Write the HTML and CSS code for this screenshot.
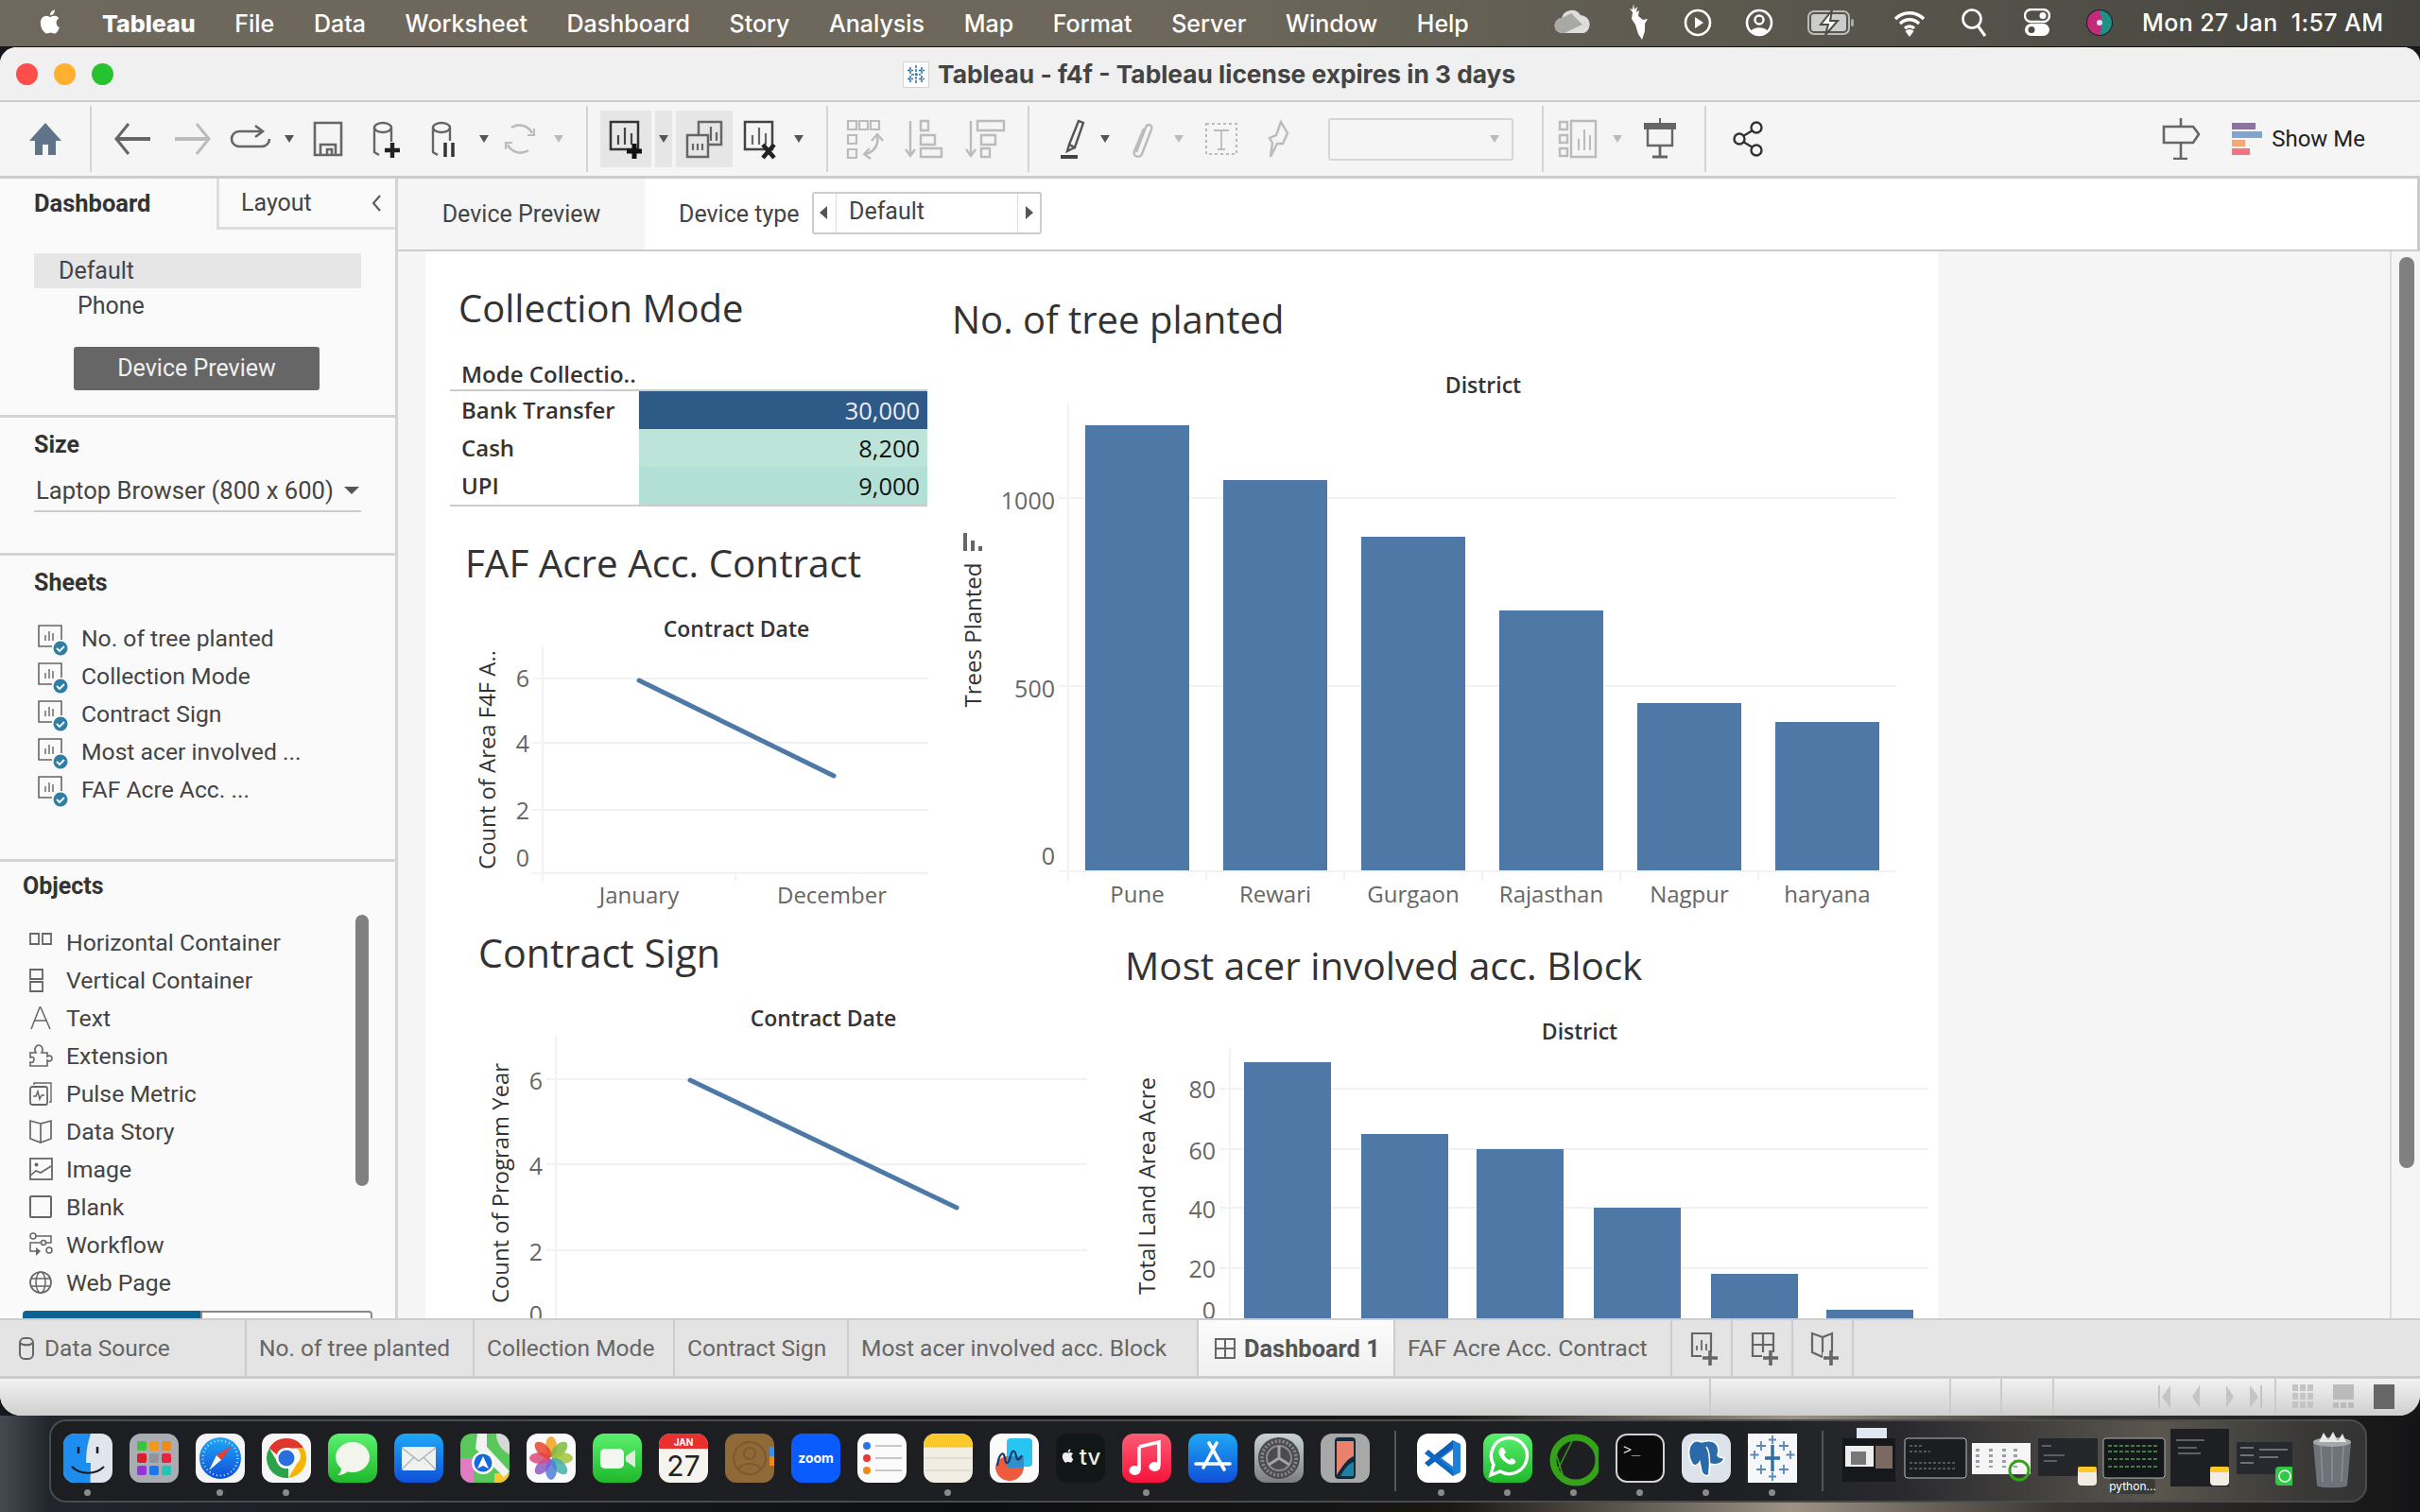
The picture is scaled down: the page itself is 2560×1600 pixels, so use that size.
FILE: index.html
```html
<!DOCTYPE html>
<html lang="en">

<head>
  <meta charset="UTF-8">
  <title>Tableau - f4f</title>
  <link rel="stylesheet" href="styles.css">
</head>

<body>

  <svg class="defs" width="0" height="0">
    <defs>
      <symbol id="apple" viewBox="0 0 24 24">
        <path d="M18.7 19.5c-.8 1.2-1.7 2.4-3 2.4-1.3 0-1.8-.8-3.3-.8-1.5 0-2 .8-3.3.8-1.3.1-2.3-1.3-3.1-2.5C4.3 17 3 12.5 4.7 9.5c.9-1.5 2.4-2.4 4.1-2.5 1.3 0 2.5.9 3.3.9.8 0 2.3-1.1 3.8-.9.7 0 2.5.3 3.6 2-.1.1-2.2 1.3-2.2 3.8 0 3 2.6 4 2.6 4-.1.1-.4 1.4-1.3 2.7M13 3.5c.7-.8 1.9-1.5 2.9-1.5.1 1.2-.3 2.3-1 3.2-.7.8-1.8 1.5-2.9 1.4-.1-1.2.4-2.3 1-3.1" />
      </symbol>
      <symbol id="sheet-check" viewBox="0 0 34 34">
        <path d="M26 17V2H2v22h14" fill="none" stroke="#666" stroke-width="1.6" />
        <path d="M9 18v-6M13 18V8M17 18v-8" fill="none" stroke="#777" stroke-width="1.6" />
        <circle cx="25" cy="26" r="7.5" fill="#2e7ea6" />
        <path d="M21 26l3 3 5-5" fill="none" stroke="#fff" stroke-width="1.8" />
      </symbol>
      <linearGradient id="g-blue" x1="0" y1="0" x2="0" y2="1">
        <stop offset="0" stop-color="#1fa8f5" />
        <stop offset="1" stop-color="#0f4fd8" />
      </linearGradient>
      <linearGradient id="g-green" x1="0" y1="0" x2="0" y2="1">
        <stop offset="0" stop-color="#5bf06f" />
        <stop offset="1" stop-color="#1fb82c" />
      </linearGradient>
      <linearGradient id="g-red" x1="0" y1="0" x2="0" y2="1">
        <stop offset="0" stop-color="#fb5c74" />
        <stop offset="1" stop-color="#f8123b" />
      </linearGradient>
      <linearGradient id="g-grey" x1="0" y1="0" x2="0" y2="1">
        <stop offset="0" stop-color="#c9d3d8" />
        <stop offset="1" stop-color="#7d7d7d" />
      </linearGradient>
    </defs>
  </svg>

  <header class="menubar">
    <svg class="apple" width="30" height="34"><use href="#apple" fill="#fff" /></svg>
    <nav class="menus">
      <span class="menu-app">Tableau</span>
      <span>File</span>
      <span>Data</span>
      <span>Worksheet</span>
      <span>Dashboard</span>
      <span>Story</span>
      <span>Analysis</span>
      <span>Map</span>
      <span>Format</span>
      <span>Server</span>
      <span>Window</span>
      <span>Help</span>
    </nav>
    <div class="status-icons">
      <svg width="42" height="30" viewBox="0 0 42 30">
        <path d="M10 26a8 8 0 0 1-1-16 11 11 0 0 1 20-3 10 10 0 0 1 4 19z" fill="#ddd" />
        <path d="M19 5l12 12-19 9H10a8 8 0 0 1-1-16z" fill="#a8a8a4" />
      </svg>
      <svg width="28" height="40" viewBox="0 0 28 40">
        <path d="M7 0l1 6 3-3-1 6 3-2-1 6 5 4 5-1-3 5v8l-3 9-4-6-3-10-4-6 1-7-3-4 3 1z" fill="#fff" />
      </svg>
      <svg width="30" height="30" viewBox="0 0 30 30">
        <circle cx="15" cy="15" r="13" fill="none" stroke="#fff" stroke-width="2.6" />
        <path d="M12 9l9 6-9 6z" fill="#fff" />
      </svg>
      <svg width="30" height="30" viewBox="0 0 30 30">
        <circle cx="15" cy="15" r="13" fill="none" stroke="#fff" stroke-width="2.6" />
        <circle cx="15" cy="12" r="4.5" fill="none" stroke="#fff" stroke-width="2.4" />
        <path d="M6 24c3-5 15-5 18 0-4 4-14 4-18 0" fill="#fff" />
      </svg>
      <svg width="50" height="28" viewBox="0 0 50 28">
        <rect x="1" y="2" width="43" height="24" rx="6" fill="none" stroke="#bbb" stroke-width="2" />
        <rect x="4" y="5" width="37" height="18" rx="3" fill="#ccc" />
        <rect x="46" y="10" width="3" height="8" rx="1.5" fill="#aaa" />
        <path d="M26 1L14 16h8l-3 11 13-15h-8z" fill="#fff" stroke="#4d4b44" stroke-width="2" />
      </svg>
      <svg width="36" height="30" viewBox="0 0 36 30">
        <path d="M3 11a21 21 0 0 1 30 0M8 16a14 14 0 0 1 20 0M13 21a7 7 0 0 1 10 0" fill="none" stroke="#fff" stroke-width="3.4" />
        <path d="M18 30l-4.500-6a6 6 0 0 1 9 0z" fill="#fff" />
      </svg>
      <svg width="30" height="32" viewBox="0 0 30 32">
        <circle cx="12" cy="12" r="9.500" fill="none" stroke="#fff" stroke-width="2.6" />
        <path d="M18 19l8 11" stroke="#fff" stroke-width="3" />
      </svg>
      <svg width="28" height="30" viewBox="0 0 28 30">
        <rect x="1" y="1" width="26" height="13" rx="6.500" fill="none" stroke="#fff" stroke-width="2.4" />
        <circle cx="20" cy="7.500" r="3.500" fill="#fff" />
        <rect x="1" y="16" width="26" height="13" rx="6.500" fill="#fff" />
        <circle cx="8" cy="22.500" r="3.500" fill="#4d4b44" />
      </svg>
      <svg class="siri" width="30" height="30" viewBox="0 0 30 30">
        <circle cx="15" cy="15" r="14" fill="#16222e" />
        <path d="M15 2a13 13 0 0 1 0 26c-3-6-3-20 0-26z" fill="#1f8f88" />
        <path d="M15 28a13 13 0 0 1 0-26c3 8 3 18 0 26z" fill="#c32a78" />
        <circle cx="15" cy="15" r="3" fill="#dfe6f5" />
      </svg>
    </div>
    <span class="clock">Mon 27 Jan&nbsp; 1:57 AM</span>
  </header>

  <div class="window">
    <div class="titlebar">
      <div class="lights">
        <i class="light light-red"></i>
        <i class="light light-yellow"></i>
        <i class="light light-green"></i>
      </div>
      <div class="win-title">
        <svg width="28" height="28" viewBox="0 0 28 28">
          <rect x=".5" y=".5" width="27" height="27" fill="#fff" stroke="#d4d4d4" />
          <path d="M14 4v20M9 14h10M8 6v7M5 9.500h6M20 6v7M17 9.500h6M8 15v7M5 18.500h6M20 15v7M17 18.500h6" stroke="#2d6ea5" stroke-width="1.500" stroke-dasharray="3 1" />
        </svg>
        <span>Tableau - f4f - Tableau license expires in 3 days</span>
      </div>
    </div>

    <div class="toolbar">
      <div class="tool">
        <svg width="44" height="44" viewBox="0 0 44 44"><path d="M22 5l17 19h-6v15h-8V28h-6v11h-8V24H5z" fill="#5f7389" /></svg>
      </div>
      <i class="tb-sep tb-sep-first"></i>

      <div class="tool tool-m">
        <svg width="44" height="44" viewBox="0 0 44 44"><path d="M17 6L4 22l13 16" fill="none" stroke="#666" stroke-width="3" /><path d="M6 22h34" stroke="#666" stroke-width="4" /></svg>
      </div>
      <div class="tool">
        <svg width="44" height="44" viewBox="0 0 44 44"><path d="M27 6l13 16-13 16" fill="none" stroke="#bbb" stroke-width="3" /><path d="M38 22H4" stroke="#bbb" stroke-width="4" /></svg>
      </div>
      <div class="tool">
        <svg width="44" height="44" viewBox="0 0 44 44"><path d="M34 14H10a8 8 0 0 0 0 16h24a8 8 0 0 0 8-8" fill="none" stroke="#666" stroke-width="2.6" /><path d="M27 8l8 6-8 6" fill="none" stroke="#666" stroke-width="2.6" /></svg>
      </div>
      <i class="caret"></i>
      <div class="tool">
        <svg width="44" height="44" viewBox="0 0 44 44"><path d="M8 5h28v34H8z" fill="none" stroke="#666" stroke-width="2.6" /><path d="M14 39V28h16v11M21 39v-6h5v6" fill="none" stroke="#666" stroke-width="2.6" /></svg>
      </div>
      <div class="tool">
        <svg width="44" height="44" viewBox="0 0 44 44"><ellipse cx="18" cy="10" rx="9" ry="5" fill="none" stroke="#666" stroke-width="2.4" /><path d="M9 10v26l5 3M27 10v15" fill="none" stroke="#666" stroke-width="2.4" /><path d="M28 26v16M20 34h16" stroke="#222" stroke-width="4.400" /></svg>
      </div>
      <div class="tool">
        <svg width="44" height="44" viewBox="0 0 44 44"><ellipse cx="18" cy="10" rx="9" ry="5" fill="none" stroke="#666" stroke-width="2.4" /><path d="M9 10v26l5 3M27 10v14" fill="none" stroke="#666" stroke-width="2.4" /><path d="M22 26v15M30 26v15" stroke="#333" stroke-width="3.500" /></svg>
      </div>
      <i class="caret"></i>
      <div class="tool tool-k">
        <svg width="44" height="44" viewBox="0 0 44 44"><path d="M13 10a15 15 0 0 1 22 6M31 34a15 15 0 0 1-22-6" fill="none" stroke="#bbb" stroke-width="2.6" /><path d="M30 18l7 0 0-7M14 26l-7 0 0 7" fill="none" stroke="#bbb" stroke-width="2.200" /></svg>
      </div>
      <i class="caret caret-off"></i>
      <i class="tb-sep tb-sep-b"></i>

      <div class="tool tool-on tool-a">
        <svg width="44" height="44" viewBox="0 0 44 44"><path d="M6 4h29v29H6z" fill="none" stroke="#333" stroke-width="2.500" /><path d="M14 28V18M21 28V10M28 28V16" stroke="#444" stroke-width="2.200" /><path d="M31 27v16M23 35h16" stroke="#111" stroke-width="5" /></svg>
      </div>
      <i class="caret caret-on"></i>
      <div class="tool tool-on tool-b">
        <svg width="44" height="44" viewBox="0 0 44 44"><path d="M16 4h24v24H16z" fill="#e6e6e6" stroke="#666" stroke-width="2.500" /><path d="M23 24v-6M29 24V9M35 24v-9" stroke="#666" stroke-width="2.200" /><path d="M4 18h22v23H4z" fill="#e6e6e6" stroke="#666" stroke-width="2.500" /><path d="M10 27v7M15 27v7M20 27v7" stroke="#666" stroke-width="2.200" /></svg>
      </div>
      <div class="tool tool-c">
        <svg width="44" height="44" viewBox="0 0 44 44"><path d="M6 4h29v29H6z" fill="none" stroke="#444" stroke-width="2.500" /><path d="M14 28V18M21 28V10M28 28V16" stroke="#666" stroke-width="2.200" /><path d="M25 28l12 14M37 28L25 42" stroke="#222" stroke-width="4.500" /></svg>
      </div>
      <i class="caret"></i>
      <i class="tb-sep tb-sep-c"></i>

      <div class="tool tool-d">
        <svg width="44" height="44" viewBox="0 0 44 44"><path d="M5 3h9v9H5zM17 3h9v9h-9zM29 3h9v9h-9zM5 18h9v9H5zM5 33h9v9H5z" fill="none" stroke="#bbb" stroke-width="2.200" /><path d="M36 18c2 10-3 18-13 20" fill="none" stroke="#bbb" stroke-width="2.600" /><path d="M30 24l6-7 6 7M28 32l-6 6 7 5" fill="none" stroke="#bbb" stroke-width="2.200" /></svg>
      </div>
      <div class="tool tool-n">
        <svg width="44" height="44" viewBox="0 0 44 44"><path d="M7 3v36M2 33l5 7 5-7" fill="none" stroke="#bbb" stroke-width="2.400" /><path d="M18 3h8v10h-8zM18 18h15v10H18zM18 32h22v9H18z" fill="none" stroke="#bbb" stroke-width="2.400" /></svg>
      </div>
      <div class="tool tool-n">
        <svg width="44" height="44" viewBox="0 0 44 44"><path d="M7 3v36M2 33l5 7 5-7" fill="none" stroke="#bbb" stroke-width="2.400" /><path d="M14 3h28v10H14zM18 18h15v10H18zM18 32h9v9h-9z" fill="none" stroke="#bbb" stroke-width="2.400" /></svg>
      </div>
      <i class="tb-sep tb-sep-d"></i>

      <div class="tool tool-e">
        <svg width="44" height="44" viewBox="0 0 44 44"><path d="M29 3l-10 25 6 3 9-26zM19 28l-2 7 8-4" fill="none" stroke="#555" stroke-width="2.400" /><path d="M10 41h18" stroke="#444" stroke-width="4" /></svg>
      </div>
      <i class="caret caret-tight"></i>
      <div class="tool tool-f">
        <svg width="44" height="44" viewBox="0 0 44 44"><path d="M18 36l10-26c2-5 8-3 6 2L24 38c-2 5-10 3-8-3l10-24" fill="none" stroke="#bbb" stroke-width="2.400" /></svg>
      </div>
      <i class="caret caret-off"></i>
      <div class="tool tool-g">
        <svg width="44" height="44" viewBox="0 0 44 44"><rect x="6" y="6" width="32" height="32" fill="none" stroke="#bbb" stroke-width="2" stroke-dasharray="3 3" /><path d="M14 13h16M22 13v20M18 33h8" fill="none" stroke="#bbb" stroke-width="1.800" /></svg>
      </div>
      <div class="tool tool-h">
        <svg width="44" height="44" viewBox="0 0 44 44"><path d="M25 4l7 12-5 11-6 0-7 14 2-15-3-5 7-3z" fill="none" stroke="#bbb" stroke-width="2.400" /></svg>
      </div>
      <div class="tb-select"><i class="caret caret-off"></i></div>
      <i class="tb-sep tb-sep-e"></i>

      <div class="tool tool-i">
        <svg width="44" height="44" viewBox="0 0 44 44"><path d="M2 4h8v8H2zM2 18h8v8H2zM2 32h8v8H2zM14 3h26v38H14z" fill="none" stroke="#bbb" stroke-width="2.400" /><path d="M22 34V22M28 34V12M34 34V18" stroke="#bbb" stroke-width="2" /></svg>
      </div>
      <i class="caret caret-off"></i>
      <div class="tool tool-j">
        <svg width="44" height="44" viewBox="0 0 44 44"><path d="M22 0v6" stroke="#666" stroke-width="2" /><path d="M5 5h34v7H5z" fill="#666" /><path d="M9 12v17h26V12" fill="none" stroke="#666" stroke-width="2.400" /><path d="M22 29v13M14 41h16" stroke="#666" stroke-width="2.800" /></svg>
      </div>
      <i class="tb-sep tb-sep-f"></i>

      <div class="tool">
        <svg width="44" height="44" viewBox="0 0 44 44"><circle cx="13" cy="22" r="5.500" fill="none" stroke="#333" stroke-width="2.400" /><circle cx="31" cy="10" r="5.500" fill="none" stroke="#333" stroke-width="2.400" /><circle cx="31" cy="34" r="5.500" fill="none" stroke="#333" stroke-width="2.400" /><path d="M17 19l10-6M17 25l10 6" stroke="#333" stroke-width="2.400" /></svg>
      </div>

      <div class="tb-right">
        <svg width="44" height="44" viewBox="0 0 44 44"><path d="M22 0v44M14 43h15" fill="none" stroke="#666" stroke-width="2.600" /><path d="M4 9h31l6 8-6 9H4z" fill="#f5f5f5" stroke="#666" stroke-width="2.600" /></svg>
        <div class="show-me">
          <div class="show-bars">
            <i class="bar-a"></i><i class="bar-b"></i><i class="bar-c"></i><i class="bar-d"></i>
          </div>
          <span>Show Me</span>
        </div>
      </div>
    </div>

    <div class="main">
      <aside class="side">
        <div class="side-tabs">
          <div class="side-tab side-tab-on">Dashboard</div>
          <div class="side-tab side-tab-off">
            <span>Layout</span>
            <svg width="12" height="20" viewBox="0 0 12 20"><path d="M10 2L3 10l7 8" fill="none" stroke="#555" stroke-width="2" /></svg>
          </div>
        </div>

        <section class="sec sec-device">
          <div class="dev-row dev-row-on">Default</div>
          <div class="dev-row dev-row-sub">Phone</div>
          <div class="dev-btn">Device Preview</div>
        </section>

        <section class="sec sec-size">
          <h4 class="sec-title">Size</h4>
          <div class="size-pick">
            <span>Laptop Browser (800 x 600)</span>
            <i class="caret caret-size"></i>
          </div>
        </section>

        <section class="sec sec-sheets">
          <h4 class="sec-title">Sheets</h4>
          <ul class="sheet-list">
            <li><svg width="34" height="34"><use href="#sheet-check" /></svg>No. of tree planted</li>
            <li><svg width="34" height="34"><use href="#sheet-check" /></svg>Collection Mode</li>
            <li><svg width="34" height="34"><use href="#sheet-check" /></svg>Contract Sign</li>
            <li><svg width="34" height="34"><use href="#sheet-check" /></svg>Most acer involved ...</li>
            <li><svg width="34" height="34"><use href="#sheet-check" /></svg>FAF Acre Acc. ...</li>
          </ul>
        </section>

        <section class="sec-objects">
          <h4 class="sec-title">Objects</h4>
          <ul class="object-list">
            <li>
              <svg width="26" height="26" viewBox="0 0 26 26"><path d="M2 4h9v11H2zM15 4h9v11h-9z" fill="none" stroke="#666" stroke-width="1.800" /></svg>
              Horizontal Container
            </li>
            <li>
              <svg width="26" height="26" viewBox="0 0 26 26"><path d="M2 2h13v10H2zM2 15h13v10H2z" fill="none" stroke="#666" stroke-width="1.800" /></svg>
              Vertical Container
            </li>
            <li>
              <svg width="26" height="26" viewBox="0 0 26 26"><path d="M3 25L12 2h1l10 23M7 16h13" fill="none" stroke="#666" stroke-width="1.500" /></svg>
              Text
            </li>
            <li>
              <svg width="26" height="26" viewBox="0 0 26 26"><path d="M2 10h6c-3-5 1-8 3-8s6 3 3 8h6v4c3-2 5 0 5 2s-2 4-5 2v6H2v-4c3 1 4-1 4-3s-1-3-4-2z" fill="none" stroke="#666" stroke-width="1.600" /></svg>
              Extension
            </li>
            <li>
              <svg width="26" height="26" viewBox="0 0 26 26"><path d="M6 4V2h18v20h-2" fill="none" stroke="#666" stroke-width="1.400" /><rect x="2" y="6" width="18" height="19" rx="2" fill="none" stroke="#666" stroke-width="1.800" /><path d="M5 16h3l2-5 2 8 2-4h3" fill="none" stroke="#666" stroke-width="1.500" /></svg>
              Pulse Metric
            </li>
            <li>
              <svg width="26" height="26" viewBox="0 0 26 26"><path d="M13 5L2 2v19l11 4 11-4V2zM13 5v20" fill="none" stroke="#666" stroke-width="1.700" /></svg>
              Data Story
            </li>
            <li>
              <svg width="26" height="26" viewBox="0 0 26 26"><rect x="2" y="2" width="23" height="22" fill="none" stroke="#666" stroke-width="1.800" /><circle cx="8.500" cy="8.500" r="2" fill="#666" /><path d="M2 20l6-5 5 2 11-7" fill="none" stroke="#666" stroke-width="1.600" /></svg>
              Image
            </li>
            <li>
              <svg width="26" height="26" viewBox="0 0 26 26"><rect x="2" y="2" width="22" height="22" rx="1" fill="none" stroke="#666" stroke-width="2" /></svg>
              Blank
            </li>
            <li>
              <svg width="26" height="26" viewBox="0 0 26 26"><circle cx="5" cy="4" r="3" fill="none" stroke="#666" stroke-width="1.500" /><path d="M8 4h16v7h-6M14 11H2v9h9" fill="none" stroke="#666" stroke-width="1.500" /><circle cx="16" cy="11" r="2.500" fill="none" stroke="#666" stroke-width="1.500" /><circle cx="22" cy="19" r="3" fill="none" stroke="#666" stroke-width="1.500" /><path d="M8 16l5 4-5 5z" fill="#666" /></svg>
              Workflow
            </li>
            <li>
              <svg width="26" height="26" viewBox="0 0 26 26"><circle cx="13" cy="13" r="11" fill="none" stroke="#666" stroke-width="1.700" /><ellipse cx="13" cy="13" rx="5" ry="11" fill="none" stroke="#666" stroke-width="1.500" /><path d="M2 9h22M2 17h22" stroke="#666" stroke-width="1.500" /></svg>
              Web Page
            </li>
          </ul>
          <div class="objects-scroll"></div>
          <div class="mode-tabs"><i class="mode-tab-on"></i><i class="mode-tab-off"></i></div>
        </section>
      </aside>

      <div class="canvas">
        <div class="device-bar">
          <div class="device-tab">Device Preview</div>
          <span class="device-label">Device type</span>
          <div class="stepper">
            <span class="step-btn step-left"></span>
            <span class="step-value">Default</span>
            <span class="step-btn step-right"></span>
          </div>
        </div>

        <div class="canvas-body">
          <div class="dash">
            <div class="dash-top">
              <div class="col-left">
                <h2 class="zone-title title-collection">Collection Mode</h2>
                <div class="mode-table">
                  <div class="mt-head">Mode Collectio..</div>
                  <div class="mt-label">Bank Transfer</div>
                  <div class="mt-val mt-high">30,000</div>
                  <div class="mt-label">Cash</div>
                  <div class="mt-val mt-cash">8,200</div>
                  <div class="mt-label">UPI</div>
                  <div class="mt-val mt-upi">9,000</div>
                </div>

                <h2 class="zone-title title-faf">FAF Acre Acc. Contract</h2>
                <svg class="chart chart-faf" width="500" height="325" viewBox="500 640 500 325">
                  <text class="c-head" x="779" y="674">Contract Date</text>
                  <path class="c-grid" d="M563 718H982M563 786H982M563 857H982M563 924H982M574 684V932M778 924V932" />
                  <text class="c-tick" x="560" y="727">6</text>
                  <text class="c-tick" x="560" y="796">4</text>
                  <text class="c-tick" x="560" y="867">2</text>
                  <text class="c-tick" x="560" y="917">0</text>
                  <path class="c-line" d="M676 720L882 821" />
                  <text class="c-x" x="676" y="956">January</text>
                  <text class="c-x" x="880" y="956">December</text>
                  <text class="c-axis" transform="rotate(-90 524 804)" x="524" y="804" textLength="232" lengthAdjust="spacingAndGlyphs">Count of Area F4F A..</text>
                </svg>
              </div>

              <div class="col-right">
                <h2 class="zone-title title-trees">No. of tree planted</h2>
                <svg class="chart chart-trees" width="1050" height="580" viewBox="1000 385 1050 580">
                  <text class="c-head" x="1569" y="416">District</text>
                  <path class="c-grid" d="M1120 527H2006M1120 726H2006M1120 922H2006M1130 427V932M1276 922V932M1422 922V932M1568 922V932M1714 922V932M1860 922V932" />
                  <text class="c-tick" x="1116" y="539">1000</text>
                  <text class="c-tick" x="1116" y="738">500</text>
                  <text class="c-tick" x="1116" y="915">0</text>
                  <rect class="c-bar" x="1148" y="450" width="110" height="471" />
                  <rect class="c-bar" x="1294" y="508" width="110" height="413" />
                  <rect class="c-bar" x="1440" y="568" width="110" height="353" />
                  <rect class="c-bar" x="1586" y="646" width="110" height="275" />
                  <rect class="c-bar" x="1732" y="744" width="110" height="177" />
                  <rect class="c-bar" x="1878" y="764" width="110" height="157" />
                  <text class="c-x" x="1203" y="955">Pune</text>
                  <text class="c-x" x="1349" y="955">Rewari</text>
                  <text class="c-x" x="1495" y="955">Gurgaon</text>
                  <text class="c-x" x="1641" y="955">Rajasthan</text>
                  <text class="c-x" x="1787" y="955">Nagpur</text>
                  <text class="c-x" x="1933" y="955">haryana</text>
                  <text class="c-axis" transform="rotate(-90 1038 672)" x="1038" y="672" textLength="153" lengthAdjust="spacingAndGlyphs">Trees Planted</text>
                  <path class="c-sort" d="M1019 564h4v19h-4zM1027 572h4v11h-4zM1035 578h4v5h-4z" />
                </svg>
              </div>
            </div>

            <div class="dash-bottom">
              <div class="col-sign">
                <h2 class="zone-title title-sign">Contract Sign</h2>
                <svg class="chart chart-sign" width="680" height="345" viewBox="500 1050 680 345">
                  <text class="c-head" x="871" y="1086">Contract Date</text>
                  <path class="c-grid" d="M578 1142H1150M578 1232H1150M578 1323H1150M588 1097V1395" />
                  <text class="c-tick" x="574" y="1153">6</text>
                  <text class="c-tick" x="574" y="1243">4</text>
                  <text class="c-tick" x="574" y="1334">2</text>
                  <text class="c-tick" x="574" y="1400">0</text>
                  <path class="c-line" d="M730 1143L1012 1278" />
                  <text class="c-axis" transform="rotate(-90 538 1252)" x="538" y="1252" textLength="254" lengthAdjust="spacingAndGlyphs">Count of Program Year</text>
                </svg>
              </div>

              <div class="col-most">
                <h2 class="zone-title title-most">Most acer involved acc. Block</h2>
                <svg class="chart chart-most" width="870" height="330" viewBox="1180 1065 870 330">
                  <text class="c-head" x="1671" y="1100">District</text>
                  <path class="c-grid" d="M1290 1152H2040M1290 1216H2040M1290 1278H2040M1290 1342H2040M1301 1110V1395" />
                  <text class="c-tick" x="1286" y="1162">80</text>
                  <text class="c-tick" x="1286" y="1227">60</text>
                  <text class="c-tick" x="1286" y="1289">40</text>
                  <text class="c-tick" x="1286" y="1352">20</text>
                  <text class="c-tick" x="1286" y="1396">0</text>
                  <rect class="c-bar" x="1316" y="1124" width="92" height="271" />
                  <rect class="c-bar" x="1440" y="1200" width="92" height="195" />
                  <rect class="c-bar" x="1562" y="1216" width="92" height="179" />
                  <rect class="c-bar" x="1686" y="1278" width="92" height="117" />
                  <rect class="c-bar" x="1810" y="1348" width="92" height="47" />
                  <rect class="c-bar" x="1932" y="1386" width="92" height="9" />
                  <text class="c-axis" transform="rotate(-90 1222 1255)" x="1222" y="1255" textLength="230" lengthAdjust="spacingAndGlyphs">Total Land Area Acre</text>
                </svg>
              </div>
            </div>
          </div>

          <div class="canvas-track"><div class="canvas-thumb"></div></div>
        </div>
      </div>
    </div>

    <div class="tabbar">
      <div class="tab tab-source">
        <svg width="18" height="26" viewBox="0 0 18 26"><rect x="2" y="2" width="14" height="22" rx="5" fill="none" stroke="#666" stroke-width="2" /><path d="M2 7c3 3 11 3 14 0" fill="none" stroke="#666" stroke-width="2" /></svg>
        Data Source
      </div>
      <div class="tab tab-trees">No. of tree planted</div>
      <div class="tab tab-coll">Collection Mode</div>
      <div class="tab tab-sign">Contract Sign</div>
      <div class="tab tab-most">Most acer involved acc. Block</div>
      <div class="tab tab-active">
        <svg width="24" height="24" viewBox="0 0 24 24"><path d="M2 2h20v20H2zM12 2v20M2 12h20" fill="none" stroke="#666" stroke-width="2" /></svg>
        Dashboard 1
      </div>
      <div class="tab tab-faf">FAF Acre Acc. Contract</div>
      <div class="tab tab-new">
        <svg width="34" height="36" viewBox="0 0 34 36"><path d="M4 2h20v24H4z" fill="none" stroke="#666" stroke-width="2.200" /><path d="M9 20v-5M14 20V9M19 20v-7" stroke="#666" stroke-width="1.800" /><rect x="14" y="22" width="18" height="14" fill="#e4e4e4" /><path d="M23 20v16M15 28h16" stroke="#666" stroke-width="3.600" /></svg>
      </div>
      <div class="tab tab-new">
        <svg width="34" height="36" viewBox="0 0 34 36"><path d="M4 2h22v24H4zM15 2v24M4 14h22" fill="none" stroke="#666" stroke-width="2.200" /><rect x="14" y="22" width="18" height="14" fill="#e4e4e4" /><path d="M23 20v16M15 28h16" stroke="#666" stroke-width="3.600" /></svg>
      </div>
      <div class="tab tab-new">
        <svg width="34" height="36" viewBox="0 0 34 36"><path d="M14 6L3 2v20l11 5 10-5V2zM14 6v21" fill="none" stroke="#666" stroke-width="2.200" /><rect x="14" y="22" width="18" height="14" fill="#e4e4e4" /><path d="M23 20v16M15 28h16" stroke="#666" stroke-width="3.600" /></svg>
      </div>
    </div>

    <div class="statusbar">
      <i class="st-cell st-a"></i>
      <i class="st-cell st-b"></i>
      <i class="st-cell st-c"></i>
      <i class="st-cell st-d"></i>
      <div class="st-cell st-nav">
        <svg width="112" height="26" viewBox="0 0 112 26" fill="#c4c4c4">
          <path d="M0 1h2v24H0zM4 13l9-12v24zM36 13l8-12v24zM72 1l8 12-8 12zM97 1l9 12-9 12zM108 1h2v24h-2z" />
        </svg>
      </div>
      <div class="st-views">
        <svg width="22" height="26" viewBox="0 0 22 26" fill="#c4c4c4"><path d="M0 0h6v7H0zM8 0h6v7H8zM16 0h6v7h-6zM0 9h6v7H0zM8 9h6v7H8zM16 9h6v7h-6zM0 18h6v7H0zM8 18h6v7H8zM16 18h6v7h-6z" /></svg>
        <svg width="22" height="26" viewBox="0 0 22 26" fill="#bbb"><path d="M0 0h22v16H0zM0 19h6v6H0zM8 19h6v6H8zM16 19h6v6h-6z" /></svg>
        <svg width="22" height="26" viewBox="0 0 22 26" fill="#666"><path d="M0 0h22v26H0z" /></svg>
      </div>
    </div>
  </div>

  <footer class="desk">
    <div class="dock">
      <div class="dock-app">
        <svg width="52" height="52" viewBox="0 0 52 52"><rect width="52" height="52" rx="12" fill="#dfe6ee" /><path d="M12 0h17c-3 9-5 18-5 31h5l-.5 21H12A12 12 0 0 1 0 40V12A12 12 0 0 1 12 0z" fill="#1e8df0" /><path d="M16 14v7M36 14v7" stroke="#1a1a1a" stroke-width="2.500" /><path d="M9 35c9 9 25 9 34 0" fill="none" stroke="#1a1a1a" stroke-width="2" /></svg>
        <i class="run-dot"></i>
      </div>
      <div class="dock-app">
        <svg width="52" height="52" viewBox="0 0 52 52"><rect width="52" height="52" rx="12" fill="#a9adb3" /><rect x="8" y="8" width="10" height="10" rx="2" fill="#3cc23f" /><rect x="21" y="8" width="10" height="10" rx="2" fill="#f29a17" /><rect x="34" y="8" width="10" height="10" rx="2" fill="#ee8a1a" /><rect x="8" y="21" width="10" height="10" rx="2" fill="#d9202a" /><rect x="21" y="21" width="10" height="10" rx="2" fill="#8e959b" /><rect x="34" y="21" width="10" height="10" rx="2" fill="#e8233f" /><rect x="8" y="34" width="10" height="10" rx="2" fill="#9334d6" /><rect x="21" y="34" width="10" height="10" rx="2" fill="#1a78ea" /><rect x="34" y="34" width="10" height="10" rx="2" fill="#22c5b4" /></svg>
      </div>
      <div class="dock-app">
        <svg width="52" height="52" viewBox="0 0 52 52"><rect width="52" height="52" rx="12" fill="#f4f4f4" /><circle cx="26" cy="26" r="22" fill="url(#g-blue)" /><circle cx="26" cy="26" r="18.500" fill="none" stroke="#d9ecff" stroke-width="2" stroke-dasharray="1 3" /><path d="M38 13L22 23l5 5z" fill="#f03b30" /><path d="M14 39l8-16 5 5z" fill="#f4f4f4" /></svg>
        <i class="run-dot"></i>
      </div>
      <div class="dock-app">
        <svg width="52" height="52" viewBox="0 0 52 52"><rect width="52" height="52" rx="12" fill="#f6f6f6" /><path d="M26 5a21 21 0 0 1 18.200 10.500H26a10.500 10.500 0 0 0-10 7L7.800 15.500A21 21 0 0 1 26 5z" fill="#e0372c" /><path d="M44.200 15.500A21 21 0 0 1 28 47l9-15a10.500 10.500 0 0 0 0-16.500z" fill="#f7b500" /><path d="M28 47A21 21 0 0 1 7.800 15.500L17 31a10.500 10.500 0 0 0 11 5.500z" fill="#2ca24a" /><circle cx="26" cy="26" r="11" fill="#fff" /><circle cx="26" cy="26" r="8.500" fill="#2a6fe0" /></svg>
        <i class="run-dot"></i>
      </div>
      <div class="dock-app">
        <svg width="52" height="52" viewBox="0 0 52 52"><rect width="52" height="52" rx="12" fill="url(#g-green)" /><ellipse cx="26" cy="25" rx="18" ry="16" fill="#f1f5ec" /><path d="M14 36c0 4-1 6-4 8 5 0 9-2 11-4z" fill="#f1f5ec" /></svg>
      </div>
      <div class="dock-app">
        <svg width="52" height="52" viewBox="0 0 52 52"><rect width="52" height="52" rx="12" fill="url(#g-blue)" /><rect x="8" y="14" width="36" height="25" rx="2" fill="#f0f0ec" /><path d="M8 15l18 14 18-14M8 38l13-13M44 38L31 25" fill="none" stroke="#a8b6c4" stroke-width="1.400" /></svg>
      </div>
      <div class="dock-app">
        <svg width="52" height="52" viewBox="0 0 52 52"><rect width="52" height="52" rx="12" fill="#59c85a" /><path d="M0 26h14v26H12A12 12 0 0 1 0 40z" fill="#e37bc3" /><path d="M36 42h16v-2a12 12 0 0 1-12 12h-4z" fill="#f6c82c" /><path d="M18 0h10v14l24 26-6 6-30-30z" fill="#f2f2f2" /><path d="M38 0h2a12 12 0 0 1 12 12v10C44 18 38 10 38 0z" fill="#d8d8d8" /><circle cx="24" cy="31" r="12" fill="#fff" /><circle cx="24" cy="31" r="9.500" fill="#1668de" /><path d="M24 24l6 13-6-3-6 3z" fill="#fff" /></svg>
      </div>
      <div class="dock-app">
        <svg width="52" height="52" viewBox="0 0 52 52"><rect width="52" height="52" rx="12" fill="#fbfbfb" /><g fill-opacity=".85"><ellipse cx="26" cy="14" rx="6" ry="11" fill="#f0a21f" /><ellipse cx="26" cy="14" rx="6" ry="11" fill="#7cba3c" transform="rotate(45 26 26)" /><ellipse cx="26" cy="14" rx="6" ry="11" fill="#a4c43a" transform="rotate(90 26 26)" /><ellipse cx="26" cy="14" rx="6" ry="11" fill="#3fb2a8" transform="rotate(135 26 26)" /><ellipse cx="26" cy="14" rx="6" ry="11" fill="#4f7ed8" transform="rotate(180 26 26)" /><ellipse cx="26" cy="14" rx="6" ry="11" fill="#8d5bc6" transform="rotate(225 26 26)" /><ellipse cx="26" cy="14" rx="6" ry="11" fill="#d9497f" transform="rotate(270 26 26)" /><ellipse cx="26" cy="14" rx="6" ry="11" fill="#e8432f" transform="rotate(315 26 26)" /></g></svg>
      </div>
      <div class="dock-app">
        <svg width="52" height="52" viewBox="0 0 52 52"><rect width="52" height="52" rx="12" fill="url(#g-green)" /><rect x="8" y="16" width="25" height="21" rx="5" fill="#f4f6f2" /><path d="M35 24l10-7v19l-10-7z" fill="#e4eade" /></svg>
      </div>
      <div class="dock-app">
        <svg width="52" height="52" viewBox="0 0 52 52"><rect width="52" height="52" rx="12" fill="#f6f4ee" /><path d="M0 16V12A12 12 0 0 1 12 0h28a12 12 0 0 1 12 12v4z" fill="#e9302f" /><text class="ic-jan" x="26" y="12.500">JAN</text><text class="ic-day" x="26" y="45">27</text></svg>
      </div>
      <div class="dock-app">
        <svg width="52" height="52" viewBox="0 0 52 52"><rect width="52" height="52" rx="12" fill="#8f6a38" /><rect x="47" y="14" width="5" height="10" fill="#3d8fe0" /><rect x="47" y="24" width="5" height="10" fill="#ee8a1a" /><circle cx="26" cy="26" r="17" fill="none" stroke="#7c5a2e" stroke-width="2" /><circle cx="26" cy="21" r="6" fill="none" stroke="#7c5a2e" stroke-width="2" /><path d="M14 38c4-8 20-8 24 0" fill="none" stroke="#7c5a2e" stroke-width="2" /></svg>
      </div>
      <div class="dock-app">
        <svg width="52" height="52" viewBox="0 0 52 52"><rect width="52" height="52" rx="12" fill="#0b5cff" /><text class="ic-zoom" x="26" y="31">zoom</text></svg>
      </div>
      <div class="dock-app">
        <svg width="52" height="52" viewBox="0 0 52 52"><rect width="52" height="52" rx="12" fill="#fbfbfb" /><circle cx="10" cy="13" r="4" fill="#2d74e0" /><circle cx="10" cy="26" r="4" fill="#e63a34" /><circle cx="10" cy="39" r="4" fill="#ee8a1a" /><path d="M19 13h28M19 26h28M19 39h28" stroke="#c8c8c8" stroke-width="1.800" /></svg>
      </div>
      <div class="dock-app">
        <svg width="52" height="52" viewBox="0 0 52 52"><rect width="52" height="52" rx="12" fill="#f1ede2" /><path d="M0 14V12A12 12 0 0 1 12 0h28a12 12 0 0 1 12 12v2z" fill="#fcc92c" /><path d="M0 14h52" stroke="#bbb" stroke-width="1.500" stroke-dasharray="1 1" /><path d="M0 26h52M0 39h52" stroke="#ddd9cc" stroke-width="1.400" /></svg>
        <i class="run-dot"></i>
      </div>
      <div class="dock-app">
        <svg width="52" height="52" viewBox="0 0 52 52"><rect width="52" height="52" rx="12" fill="#fbfbfb" /><rect x="18" y="5" width="27" height="30" rx="4" fill="#29c5f0" /><path d="M6 34a15 15 0 0 0 30 2V24H18A15 15 0 0 0 6 34z" fill="#ef5b3e" /><rect x="19" y="24" width="17" height="12" fill="#2f8fc8" /><path d="M8 34c2-14 7-16 8-8s4 6 6-2 5-6 6 0 4 3 6-1" fill="none" stroke="#173a6b" stroke-width="2.200" /></svg>
      </div>
      <div class="dock-app">
        <svg width="52" height="52" viewBox="0 0 52 52"><rect width="52" height="52" rx="12" fill="#111716" /><svg x="6" y="14" width="19" height="21" viewBox="3 1 18 22"><use href="#apple" fill="#eee" /></svg><text class="ic-tv" x="36" y="33">tv</text></svg>
      </div>
      <div class="dock-app">
        <svg width="52" height="52" viewBox="0 0 52 52"><rect width="52" height="52" rx="12" fill="url(#g-red)" /><path d="M18 14l21-5v25" fill="none" stroke="#fff" stroke-width="3.600" /><path d="M18 14v25" stroke="#fff" stroke-width="3.600" /><ellipse cx="13.500" cy="39" rx="6" ry="5" fill="#fff" /><ellipse cx="34.500" cy="35" rx="6" ry="5" fill="#fff" /></svg>
        <i class="run-dot"></i>
      </div>
      <div class="dock-app">
        <svg width="52" height="52" viewBox="0 0 52 52"><rect width="52" height="52" rx="12" fill="url(#g-blue)" /><path d="M22 10l16 28M30 10L16 36M8 32h36" fill="none" stroke="#fff" stroke-width="3.600" stroke-linecap="round" /></svg>
      </div>
      <div class="dock-app">
        <svg width="52" height="52" viewBox="0 0 52 52"><rect width="52" height="52" rx="12" fill="url(#g-grey)" /><circle cx="26" cy="26" r="22" fill="#4c4c50" /><circle cx="26" cy="26" r="18" fill="none" stroke="#8a8a8c" stroke-width="3.500" stroke-dasharray="2 2" /><circle cx="26" cy="26" r="13" fill="none" stroke="#8a8a8c" stroke-width="2" /><path d="M26 26V13M26 26l-11 7M26 26l11 7" stroke="#a4a4a6" stroke-width="3" /></svg>
      </div>
      <div class="dock-app">
        <svg width="52" height="52" viewBox="0 0 52 52"><rect width="52" height="52" rx="12" fill="#a8a8a8" /><rect x="15" y="4" width="22" height="44" rx="4" fill="#0f2b3c" /><path d="M17 8h18v16c-6 2-12 10-18 20z" fill="#e9826c" /><path d="M35 20v10c-6 2-10 8-14 15h14z" fill="#1f7fa8" /></svg>
      </div>

      <i class="dock-sep"></i>

      <div class="dock-app">
        <svg width="52" height="52" viewBox="0 0 52 52"><rect width="52" height="52" rx="12" fill="#fff" /><path d="M38 7l8 4v30l-8 4-21-20z" fill="#1f80d8" /><path d="M38 7L8 31l4 4 26-20z" fill="#0f5fb8" /><path d="M8 21l4-4 26 22v6z" fill="#0f68c4" /><path d="M38 17v18l-12-9z" fill="#fff" /></svg>
        <i class="run-dot"></i>
      </div>
      <div class="dock-app">
        <svg width="52" height="52" viewBox="0 0 52 52"><rect width="52" height="52" rx="12" fill="url(#g-green)" /><path d="M8 44l3-11a19 19 0 1 1 7 7z" fill="none" stroke="#fff" stroke-width="3.400" /><path d="M19 15c-4 3-3 8 2 13s10 6 13 3c1-2 0-3-4-5l-2 2c-3-1-5-3-6-6l2-2c-2-5-3-6-5-5z" fill="#fff" /></svg>
        <i class="run-dot"></i>
      </div>
      <div class="dock-app">
        <svg width="52" height="56" viewBox="0 0 52 56"><circle cx="28" cy="28" r="24" fill="none" stroke="#35a319" stroke-width="7" /><path d="M6 18l14-12M8 40L24 8M16 50L8 24" fill="none" stroke="#35a319" stroke-width="1.500" /></svg>
        <i class="run-dot"></i>
      </div>
      <div class="dock-app">
        <svg width="52" height="52" viewBox="0 0 52 52"><rect width="52" height="52" rx="12" fill="#cfd3d6" /><rect x="2" y="2" width="48" height="48" rx="10" fill="#0a0a0a" /><text class="ic-term" x="8" y="22">&gt;_</text></svg>
        <i class="run-dot"></i>
      </div>
      <div class="dock-app">
        <svg width="52" height="52" viewBox="0 0 52 52"><rect width="52" height="52" rx="12" fill="#dce3ea" /><path d="M14 8c-8 4-8 16-3 24 2 3 6 2 8-2l2 10c1 4 6 6 8 3l1-11c8 2 14-1 15-6-3-1-6 0-7-3 2-7 0-14-7-15-5-1-8 1-10 1-3-1-5-2-7-1z" fill="#2a6aa8" stroke="#fff" stroke-width="1.500" /><path d="M26 14c3 4 4 16 3 28" fill="none" stroke="#fff" stroke-width="1.500" /></svg>
        <i class="run-dot"></i>
      </div>
      <div class="dock-app">
        <svg width="52" height="52" viewBox="0 0 52 52"><rect x="-1" y="-2" width="54" height="56" fill="#f6f7f8" /><path d="M26 12v28M18 26h16" stroke="#2d6ea5" stroke-width="3.400" /><path d="M26 2v9M22 6.500h8M26 41v9M22 45.500h8M7 18v9M2.500 22.500h9M45 18v9M40.500 22.500h9M14 8v10M9 13h10M38 8v10M33 13h10M14 33v10M9 38h10M38 33v10M33 38h10" stroke="#5a88b5" stroke-width="1.800" /></svg>
        <i class="run-dot"></i>
      </div>

      <i class="dock-sep dock-sep-b"></i>

      <svg class="dock-windows" width="480" height="84" viewBox="1945 1502 480 84">
        <rect x="1964" y="1511" width="32" height="14" fill="#dfe8f2" />
        <rect x="1949" y="1522" width="56" height="46" fill="#16181c" />
        <rect x="1952" y="1530" width="30" height="22" fill="#eee" />
        <rect x="1958" y="1536" width="16" height="14" fill="#777" />
        <rect x="1984" y="1530" width="18" height="24" fill="#7a6a62" />
        <rect x="2015" y="1522" width="65" height="42" rx="3" fill="#1b1d21" stroke="#b8bcc0" />
        <path d="M2020 1530h14M2020 1536h22M2020 1548h50M2020 1554h50" stroke="#8c8f94" stroke-width="1" stroke-dasharray="3 2" />
        <rect x="2086" y="1527" width="62" height="33" fill="#f5f5f5" />
        <path d="M2092 1533v20M2106 1533v20M2120 1533v20M2132 1533v20" stroke="#9aa0a6" stroke-width="4" stroke-dasharray="3 3" />
        <circle cx="2136" cy="1556" r="10" fill="none" stroke="#35a319" stroke-width="3" />
        <rect x="2156" y="1522" width="63" height="40" fill="#24262a" />
        <path d="M2160 1530h10M2162 1540h22M2162 1546h14" stroke="#6e7276" stroke-width="1.500" />
        <rect x="2198" y="1552" width="20" height="20" rx="4" fill="#f1ede2" />
        <rect x="2198" y="1552" width="20" height="6" rx="2" fill="#fcc92c" />
        <rect x="2225" y="1522" width="65" height="42" rx="3" fill="#14171a" stroke="#a8acb0" />
        <path d="M2230 1530h52M2230 1536h52M2230 1544h52M2230 1552h52" stroke="#5a9a5a" stroke-width="1.500" stroke-dasharray="4 2" />
        <rect x="2232" y="1565" width="48" height="16" rx="4" fill="#3a3a38" />
        <text class="ic-py" x="2256" y="1577">python...</text>
        <rect x="2296" y="1512" width="62" height="61" fill="#1d1f22" />
        <path d="M2302 1524h30M2304 1532h20M2304 1538h24" stroke="#777" stroke-width="1.500" />
        <rect x="2338" y="1552" width="20" height="20" rx="4" fill="#f1ede2" />
        <rect x="2338" y="1552" width="20" height="6" rx="2" fill="#fcc92c" />
        <rect x="2366" y="1526" width="61" height="34" fill="#26292d" />
        <path d="M2370 1532h14M2370 1540h14M2370 1548h14M2390 1534h30M2390 1542h20" stroke="#6e7276" stroke-width="2" />
        <rect x="2407" y="1552" width="20" height="20" rx="4" fill="#30c945" />
        <circle cx="2417" cy="1562" r="6" fill="none" stroke="#fff" stroke-width="1.600" />
      </svg>

      <svg class="dock-trash" width="48" height="62" viewBox="0 0 48 62">
        <path d="M4 12h40l-4 46c-1 3-31 3-32 0z" fill="#6d7378" />
        <path d="M12 16l2 38M24 16v38M36 16l-2 38" stroke="#8b9094" stroke-width="1.500" />
        <ellipse cx="24" cy="12" rx="20" ry="5" fill="#a5a8aa" />
        <path d="M10 12l5-10 5 8 5-9 5 10 5-8 4 9z" fill="#e8e8e8" />
      </svg>
    </div>
  </footer>

</body>

</html>
```

FILE: styles.css
```css
* {
  box-sizing: border-box;
  margin: 0;
  padding: 0;
}

html,
body {
  width: 2560px;
  height: 1600px;
  overflow: hidden;
}

body {
  font-family: 'Roboto', sans-serif;
  background: #15171b;
  color: #333;
  display: flex;
  flex-direction: column;
}

.defs {
  position: absolute;
}

ul {
  list-style: none;
}

i {
  display: block;
}

/* Menu bar */
.menubar {
  height: 49px;
  flex: none;
  display: flex;
  align-items: center;
  background: linear-gradient(90deg, #6f695d 0%, #6c675a 50%, #55534a 80%, #44433d 100%);
  color: #fff;
  font-family: 'Inter', sans-serif;
  font-size: 25px;
  padding-left: 38px;
}

.apple {
  flex: none;
  margin-bottom: 4px;
}

.menus {
  display: flex;
  gap: 41.6px;
  margin-left: 40px;
  font-weight: 500;
  white-space: nowrap;
}

.menu-app {
  font-weight: 800;
}

.status-icons {
  position: absolute;
  left: 1643px;
  top: 4px;
  height: 40px;
  display: flex;
  align-items: center;
}

.status-icons svg {
  margin-right: 37px;
}

.status-icons svg:nth-child(1) {
  margin-right: 36px;
}

.status-icons svg:nth-child(2) {
  margin-right: 32px;
}

.status-icons svg:nth-child(3) {
  margin-right: 35px;
}

.status-icons svg:nth-child(4) {
  margin-right: 36px;
}

.status-icons svg:nth-child(5) {
  margin-right: 40px;
}

.status-icons svg:nth-child(6) {
  margin-right: 36px;
}

.clock {
  position: absolute;
  left: 2266px;
  top: 9px;
  font-weight: 500;
  letter-spacing: .4px;
  white-space: nowrap;
}

/* Window */
.window {
  height: 1449px;
  flex: none;
  display: flex;
  flex-direction: column;
  background: #f5f5f5;
  border-radius: 18px 18px 22px 22px;
  overflow: hidden;
  border-top: 1px solid #111;
}

.titlebar {
  height: 58px;
  flex: none;
  display: flex;
  align-items: center;
  position: relative;
  background: #f0f0f0;
  border-bottom: 2px solid #ccc;
}

.lights {
  display: flex;
  gap: 17px;
  margin-left: 17px;
}

.light {
  width: 23px;
  height: 23px;
  border-radius: 50%;
}

.light-red {
  background: #ff4d4a;
}

.light-yellow {
  background: #ffb02e;
}

.light-green {
  background: #27c22f;
}

.win-title {
  position: absolute;
  left: 955px;
  top: 13px;
  display: flex;
  align-items: center;
  gap: 9px;
  font-family: 'Inter', sans-serif;
  font-weight: 700;
  font-size: 26.3px;
  color: #444;
  white-space: nowrap;
}

/* Toolbar */
.toolbar {
  height: 81px;
  flex: none;
  display: flex;
  align-items: center;
  padding-left: 17px;
  background: #f5f5f5;
  border-bottom: 3px solid #ccc;
}

.tool {
  width: 62px;
  height: 60px;
  flex: none;
  display: flex;
  align-items: center;
  justify-content: center;
}

.tool-on {
  background: #e6e6e6;
}

.tool-a {
  width: 54px;
  margin-left: 13px;
}

.tool-b {
  width: 60px;
}

.tool-c {
  margin-left: -2px;
}

.tool-d {
  margin-left: 7px;
}

.tool-e {
  margin-left: 14px;
}

.tool-f {
  margin-left: -4px;
}

.tool-g {
  margin-left: 4px;
}

.tool-h {
  margin-left: -2px;
}

.tool-i {
  margin-left: -8px;
}

.tool-j {
  margin-left: 4px;
}

.tool-k {
  margin-left: -3px;
}

.tool-m {
  margin-left: -2px;
}

.tool-n {
  margin-left: 2px;
}

.tb-sep {
  width: 2px;
  height: 70px;
  flex: none;
  background: #d4d4d4;
}

.tb-sep-first {
  margin: 0 15px 0 16px;
}

.tb-sep-b {
  margin-left: 19px;
}

.tb-sep-c {
  margin-left: 19px;
}

.tb-sep-d {
  margin-left: 14px;
}

.tb-sep-e {
  margin: 0 14px 0 30px;
}

.tb-sep-f {
  margin: 0 13px 0 16px;
}

.caret {
  width: 20px;
  height: 16px;
  flex: none;
  position: relative;
}

.caret::after {
  content: '';
  position: absolute;
  left: 5px;
  top: 4px;
  border-left: 5px solid transparent;
  border-right: 5px solid transparent;
  border-top: 8px solid #555;
}

.caret-off::after {
  border-top-color: #bbb;
}

.caret-on {
  height: 60px;
  width: 18px;
  margin: 0 4px;
  background: #e6e6e6;
}

.caret-on::after {
  top: 26px;
  left: 4px;
}

.caret-tight {
  margin-left: -6px;
}

.caret-size::after {
  left: 2px;
  border-left-width: 8px;
  border-right-width: 8px;
  border-top-width: 8px;
}

.tb-select {
  width: 196px;
  height: 45px;
  flex: none;
  display: flex;
  align-items: center;
  justify-content: flex-end;
  padding-right: 8px;
  margin-left: 22px;
  border: 2px solid #d6d6d6;
  border-radius: 3px;
}

.tb-right {
  margin-left: auto;
  display: flex;
  align-items: center;
  gap: 32px;
  padding-right: 58px;
}

.show-me {
  display: flex;
  align-items: center;
  gap: 10px;
  font-size: 24px;
  color: #222;
}

.show-bars {
  display: flex;
  flex-direction: column;
  gap: 2px;
}

.show-bars i {
  height: 7px;
}

.bar-a {
  width: 25px;
  background: #8a739c;
}

.bar-b {
  width: 32px;
  background: #7fa6cf;
}

.bar-c {
  width: 14px;
  background: #f4a778;
}

.bar-d {
  width: 19px;
  background: #f4737f;
}

/* Main area */
.main {
  height: 1206px;
  flex: none;
  display: flex;
}

.side {
  width: 421px;
  flex: none;
  display: flex;
  flex-direction: column;
  background: #fafafa;
  border-right: 3px solid #d4d4d4;
  font-size: 25px;
  color: #444;
}

.side-tabs {
  height: 54px;
  flex: none;
  display: flex;
}

.side-tab {
  display: flex;
  align-items: center;
}

.side-tab-on {
  width: 229px;
  padding-left: 36px;
  font-weight: 700;
  font-size: 25.5px;
  color: #333;
  padding-bottom: 2px;
}

.side-tab-off {
  flex: 1;
  justify-content: space-between;
  padding: 0 14px 0 23px;
  border-left: 3px solid #ddd;
  border-bottom: 3px solid #ddd;
}

.sec {
  border-bottom: 3px solid #d4d4d4;
  flex: none;
}

.sec-device {
  height: 199px;
  padding-top: 25px;
}

.dev-row {
  height: 37px;
  line-height: 37px;
  margin: 0 36px;
}

.dev-row-on {
  background: #e6e6e6;
  padding-left: 26px;
}

.dev-row-sub {
  padding-left: 46px;
}

.dev-btn {
  width: 260px;
  height: 46px;
  margin: 25px 0 0 78px;
  border-radius: 3px;
  background: #666;
  color: #f0f0f0;
  text-align: center;
  line-height: 46px;
}

.sec-title {
  font-size: 25px;
  font-weight: 700;
  line-height: 28px;
  color: #333;
}

.sec-size {
  height: 146px;
  padding: 15px 36px 0;
}

.size-pick {
  height: 45px;
  margin-top: 12px;
  display: flex;
  align-items: center;
  justify-content: space-between;
  padding-left: 2px;
  border-bottom: 2px solid #ccc;
  font-size: 25.6px;
  white-space: nowrap;
}

.size-pick .caret {
  margin-right: 0;
}

.sec-sheets {
  height: 324px;
  padding: 15px 36px 0;
}

.sheet-list {
  margin-top: 24px;
}

.sheet-list li {
  height: 40px;
  display: flex;
  align-items: center;
  gap: 13px;
  padding-left: 3px;
  white-space: nowrap;
  font-size: 24.7px;
}

.sheet-list svg {
  flex: none;
  margin-top: 4px;
}

.sec-objects {
  flex: 1;
  position: relative;
  padding: 12px 24px 0;
  overflow: hidden;
}

.object-list {
  margin-top: 25px;
}

.object-list li {
  height: 40px;
  display: flex;
  align-items: center;
  gap: 14px;
  padding-left: 6px;
  white-space: nowrap;
  font-size: 24.8px;
}

.object-list svg {
  flex: none;
}

.objects-scroll {
  position: absolute;
  left: 376px;
  top: 56px;
  width: 14px;
  height: 287px;
  border-radius: 7px;
  background: #808080;
}

.mode-tabs {
  display: flex;
  width: 370px;
  height: 20px;
  margin-top: 10px;
}

.mode-tab-on {
  width: 188px;
  background: #0a6390;
  border-radius: 4px 0 0 0;
}

.mode-tab-off {
  flex: 1;
  background: #fff;
  border: 2px solid #888;
  border-radius: 0 4px 0 0;
}

/* Canvas */
.canvas {
  flex: 1;
  min-width: 0;
  display: flex;
  flex-direction: column;
  background: #f5f5f5;
}

.device-bar {
  height: 77px;
  flex: none;
  display: flex;
  align-items: center;
  background: #fff;
  border-bottom: 2px solid #ccc;
  border-right: 3px solid #ccc;
  font-size: 25px;
  color: #444;
}

.device-tab {
  width: 261px;
  height: 100%;
  display: flex;
  align-items: center;
  justify-content: center;
  background: #f5f5f5;
}

.device-label {
  margin: 0 12px 0 36px;
  width: 129px;
  white-space: nowrap;
}

.stepper {
  width: 243px;
  height: 45px;
  display: flex;
  align-items: center;
  border: 2px solid #ccc;
  border-radius: 3px;
  margin-top: -3px;
}

.step-btn {
  width: 24px;
  height: 100%;
  flex: none;
  position: relative;
}

.step-left {
  border-right: 1px solid #ddd;
}

.step-right {
  border-left: 1px solid #ddd;
}

.step-btn::after {
  content: '';
  position: absolute;
  top: 13px;
  border-top: 7px solid transparent;
  border-bottom: 7px solid transparent;
}

.step-left::after {
  left: 6px;
  border-right: 8px solid #555;
}

.step-right::after {
  left: 8px;
  border-left: 8px solid #555;
}

.step-value {
  flex: 1;
  padding-left: 13px;
  padding-bottom: 3px;
}

.canvas-body {
  flex: 1;
  min-height: 0;
  display: flex;
  padding-left: 29px;
}

.dash {
  width: 1600px;
  background: #fff;
  overflow: hidden;
  display: flex;
  flex-direction: column;
}

.canvas-track {
  margin-left: auto;
  width: 32px;
  border-left: 2px solid #ddd;
  padding: 6px 0 0 8px;
}

.canvas-thumb {
  width: 16px;
  height: 964px;
  border-radius: 8px;
  background: #808080;
}

/* Dashboard zones */
.dash-top {
  height: 700px;
  flex: none;
  display: flex;
}

.dash-bottom {
  flex: 1;
  min-height: 0;
  display: flex;
}

.col-left {
  width: 550px;
  flex: none;
  padding-top: 30px;
}

.col-right {
  flex: 1;
  padding-top: 42px;
}

.col-sign {
  width: 730px;
  flex: none;
  padding-top: 12px;
}

.col-most {
  flex: 1;
  padding-top: 26px;
}

.zone-title {
  font-family: 'Open Sans', sans-serif;
  font-weight: 400;
  font-size: 40px;
  line-height: 60px;
  color: #333;
  white-space: nowrap;
}

.title-collection {
  padding-left: 35px;
}

.title-faf {
  padding-left: 42px;
  margin-top: 30px;
  font-size: 40.4px;
}

.title-trees {
  padding-left: 7px;
}

.title-sign {
  padding-left: 56px;
  font-size: 41.2px;
}

.title-most {
  padding-left: 10px;
  font-size: 40.4px;
}

.mode-table {
  width: 505px;
  margin: 22px 0 0 26px;
  display: grid;
  grid-template-columns: 200px 305px;
  grid-template-rows: 36px repeat(3, 40px);
  font-family: 'Open Sans', sans-serif;
  font-size: 24px;
  border-bottom: 2px solid #ccc;
}

.mt-head {
  grid-column: 1 / 3;
  padding-left: 12px;
  font-weight: 600;
  line-height: 36px;
  border-bottom: 2px solid #ccc;
}

.mt-label {
  padding-left: 12px;
  font-weight: 600;
  line-height: 40px;
}

.mt-val {
  text-align: right;
  padding-right: 8px;
  line-height: 40px;
  font-size: 25.4px;
}

.mt-high {
  background: #2e5a87;
  color: #eef;
}

.mt-cash {
  background: #bce4d8;
  color: #111;
}

.mt-upi {
  background: #b3e0d6;
  color: #111;
}

.chart {
  display: block;
  overflow: hidden;
  font-family: 'Open Sans', sans-serif;
}

.chart-faf {
  margin: 14px 0 0 50px;
}

.chart-trees {
  margin-top: 17px;
}

.chart-sign {
  margin: 12px 0 0 50px;
}

.chart-most {
  margin-top: 13px;
}

.c-head {
  font-size: 23px;
  font-weight: 600;
  text-anchor: middle;
  fill: #333;
}

.c-grid {
  fill: none;
  stroke: #f2f2f2;
  stroke-width: 2;
}

.c-tick {
  font-size: 25px;
  text-anchor: end;
  fill: #666;
}

.c-x {
  font-size: 24px;
  text-anchor: middle;
  fill: #666;
}

.c-axis {
  font-size: 24px;
  text-anchor: middle;
  fill: #333;
}

.c-bar {
  fill: #4e79a7;
}

.c-line {
  fill: none;
  stroke: #4e79a7;
  stroke-width: 5;
  stroke-linecap: round;
}

.c-sort {
  fill: #666;
}

/* Sheet tabs */
.tabbar {
  height: 64px;
  flex: none;
  display: flex;
  background: #e4e4e4;
  border-top: 2px solid #ccc;
  border-bottom: 3px solid #ccc;
  font-size: 24.5px;
  color: #666;
}

.tab {
  flex: none;
  display: flex;
  align-items: center;
  padding-left: 13px;
  border-right: 2px solid #ccc;
  white-space: nowrap;
}

.tab-source {
  width: 261px;
  gap: 10px;
  padding-left: 19px;
}

.tab-trees {
  width: 241px;
}

.tab-coll {
  width: 212px;
}

.tab-sign {
  width: 184px;
}

.tab-most {
  width: 370px;
}

.tab-active {
  width: 208px;
  gap: 8px;
  padding-left: 16px;
  font-weight: 700;
  font-size: 25.4px;
  color: #555;
  background: linear-gradient(180deg, #fcfcfc, #efefef);
}

.tab-faf {
  width: 293px;
  font-size: 24.8px;
}

.tab-new {
  width: 64px;
  padding-left: 17px;
}

/* Status bar */
.statusbar {
  flex: 1;
  display: flex;
  background: linear-gradient(180deg, #f2f2f2, #cfcfcf);
}

.st-cell {
  border-right: 2px solid #ccc;
  flex: none;
  height: 100%;
}

.st-a {
  width: 1810px;
}

.st-b {
  width: 254px;
}

.st-c {
  width: 54px;
}

.st-d {
  width: 55px;
}

.st-nav {
  width: 235px;
  padding: 6px 0 0 110px;
}

.st-nav svg,
.st-views svg {
  display: block;
}

.st-views {
  display: flex;
  gap: 21px;
  padding: 6px 0 0 17px;
}

/* Dock and desktop */
.desk {
  flex: 1;
  background: linear-gradient(90deg, #454a52 0, #22262c 2%, #0d0e11 40%, #1a1714 60%, #9c9384 74%, #3a3632 85%, #141416 100%);
  padding: 4px 0 0 52px;
}

.dock {
  width: 2452px;
  height: 88px;
  display: flex;
  padding: 13px 0 0 13px;
  gap: 18px;
  background: linear-gradient(90deg, #1c1e22 0%, #1d1f23 72%, #2a2a2e 80%, #5a564e 91%, #3b3a38 97%, #333 100%);
  border: 2px solid #4a4b4e;
  border-radius: 18px;
}

.dock-app {
  width: 52px;
  flex: none;
  position: relative;
}

.dock-app svg {
  display: block;
}

.run-dot {
  position: absolute;
  left: 22px;
  top: 59px;
  width: 7px;
  height: 7px;
  border-radius: 50%;
  background: #8a8a8a;
}

.dock-sep {
  width: 2px;
  height: 64px;
  flex: none;
  margin: -3px 4px 0 8px;
  background: #55565a;
}

.dock-sep-b {
  margin-right: -2px;
}

.dock-windows {
  flex: none;
  margin-top: -15px;
}

.dock-trash {
  flex: none;
  margin-top: -3px;
}

.ic-jan {
  font: 700 10px 'Inter', sans-serif;
  fill: #fff;
  text-anchor: middle;
}

.ic-day {
  font: 400 30px 'Inter', sans-serif;
  fill: #222;
  text-anchor: middle;
}

.ic-zoom {
  font: 700 14px 'Inter', sans-serif;
  fill: #fff;
  text-anchor: middle;
}

.ic-tv {
  font: 500 24px 'Inter', sans-serif;
  fill: #eee;
  text-anchor: middle;
}

.ic-term {
  font: 400 15px 'Liberation Mono', monospace;
  fill: #eee;
}

.ic-py {
  font: 400 12px 'Inter', sans-serif;
  fill: #fff;
  text-anchor: middle;
}
```
